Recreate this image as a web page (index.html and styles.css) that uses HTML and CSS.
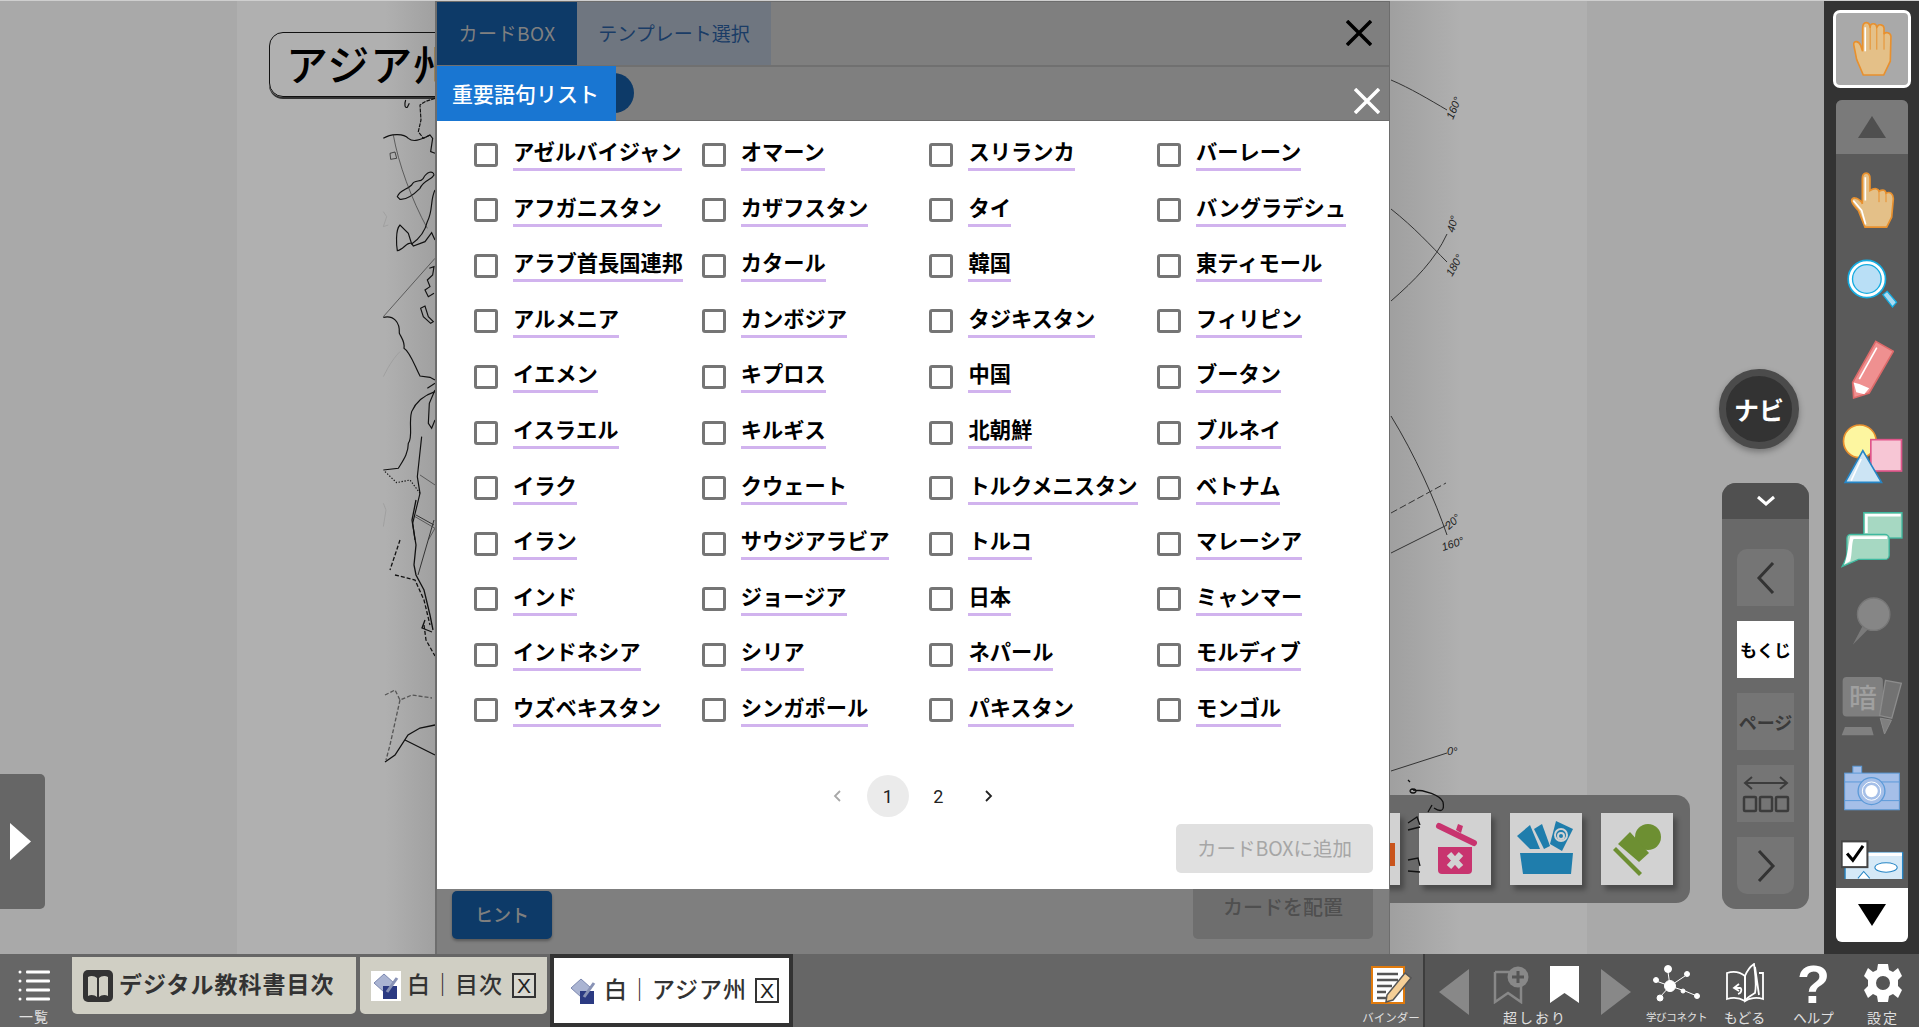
FILE: index.html
```html
<!DOCTYPE html>
<html lang="ja">
<head>
<meta charset="utf-8">
<title>カードBOX</title>
<link rel="stylesheet" href="styles.css">
</head>
<body>
<div class="app">
  <main class="workspace">
    <section class="stage">
      <div class="page-title">アジア州</div>

      <div class="stamp-tray">
        <div class="stamp"><svg width="72" height="72" viewBox="0 0 72 72"><rect x="62" y="30" width="5" height="23" fill="#c9541c"/></svg></div>
        <div class="stamp"><svg width="72" height="72" viewBox="0 0 72 72"><path d="M20 13L55 30" stroke="#c8346f" stroke-width="6" stroke-linecap="round"/><path d="M37 17l2-6 5 2-2 7Z" fill="#c8346f"/><path d="M19 34H53V57a4 4 0 0 1-4 4H23a4 4 0 0 1-4-4Z" fill="#c8346f"/><path d="M30 41L42 54M42 41L30 54" stroke="#d2d2d2" stroke-width="6"/></svg></div>
        <div class="stamp"><svg width="72" height="72" viewBox="0 0 72 72"><path d="M10 40H63L61 61H13Z" fill="#1f7dac"/><path d="M7 23L20 12L30 36H20Z" fill="#1f7dac"/><path d="M24 16L32 11L40 33L34 36Z" fill="#1f7dac"/><path d="M46 8L63 16L52 38L40 31Z" fill="#1f7dac"/><circle cx="51" cy="22" r="6" fill="none" stroke="#d2d2d2" stroke-width="2"/><circle cx="51" cy="23" r="3" fill="none" stroke="#d2d2d2" stroke-width="2"/></svg></div>
        <div class="stamp"><svg width="72" height="72" viewBox="0 0 72 72"><circle cx="47" cy="24" r="13" fill="#6d8f32"/><path d="M17 31L29 19L48 40L38 49Z" fill="#6d8f32"/><path d="M12 37L38 63L41 60L15 34Z" fill="#6d8f32"/></svg></div>
      </div>

      <svg class="map" width="1824" height="954" viewBox="0 0 1824 954">
        <g transform="translate(340 90) scale(.3333)" fill="none" stroke="#111" stroke-width="3.500">
          <path d="M197 30C192 45 195 55 202 52L208 40"/>
          <path d="M285 25L255 35L240 45L243 90L235 125L250 145L270 135" stroke-dasharray="12 3"/>
          <path d="M130 145C150 132 190 128 205 145C220 158 240 150 270 135L278 145L272 185L285 190"/>
          <path d="M150 190L165 186L170 205L152 208Z" stroke-width="2"/>
          <path d="M172 320C180 300 200 300 215 285C225 265 240 280 250 265C260 245 280 240 282 255C275 270 250 270 240 295C225 310 200 330 180 328Z"/>
          <path d="M285 300C270 330 280 360 262 395C255 425 240 445 215 462L205 430L180 405C165 420 170 470 172 482C190 480 200 455 215 460L220 468L255 455L275 428L285 450"/>
          <path d="M268 535L282 530L278 555L262 570L270 590L255 600L265 620L282 610"/>
          <path d="M242 655L255 648L265 680L280 695L272 700L250 680Z"/>
          <path d="M130 682C160 675 180 695 178 730C185 745 195 755 192 775C210 785 225 830 240 858L270 862L285 870"/>
          <path d="M285 905C255 915 230 930 215 965C205 1000 220 1040 205 1060C205 1090 190 1110 175 1135L130 1140"/>
          <path d="M285 900L268 940L265 1000L275 1015L285 990"/>
          <path d="M262 895L285 880"/>
          <path d="M245 1040L232 1160L240 1210L218 1300L225 1350"/>
          <path d="M135 1145L170 1178L210 1170L240 1210" stroke-dasharray="4 5"/>
          <path class="map-thin" d="M160 135C175 220 215 330 262 415M130 680L285 505M240 1155L285 1185M225 1280L285 1315L265 1350"/>
          <path class="map-faded" d="M180 785C165 800 150 820 130 860M130 365L140 380L130 410L145 405M130 1240L138 1260L130 1310"/>
        </g>
        <g fill="none" stroke="#111" stroke-width="1.300">
          <path d="M416 500L412 520L416 545L414 565L416 575L424 590L430 615L433 630M425 620L422 628L432 632"/>
          <path d="M424 625L426 640L435 656M395 575L415 580L424 600L430 625M400 540L390 570" stroke-dasharray="4 2"/>
          <path d="M385 695L395 690L400 700L412 695L432 698M400 700L390 745L386 760" stroke-dasharray="4 2" stroke="#555"/>
          <path d="M385 762L395 755L408 735L420 728L435 725M405 740L435 755"/>
          <path class="map-line" d="M416 515L434 525M434 520L418 575"/>
          <path class="map-line" d="M1391 80C1410 88 1430 100 1447 110M1391 209C1415 228 1430 245 1447 262M1391 301C1415 280 1435 260 1447 234M1391 416C1415 455 1435 500 1447 535M1391 553L1447 525M1391 771L1447 753"/>
          <path class="map-line" d="M1391 513L1446 483" stroke-dasharray="7 3"/>
          <path d="M1413 790C1425 790 1440 795 1443 802C1445 812 1440 812 1434 808M1432 805L1428 812M1413 789a3 2 0 1 0 .1 0M1408 780l2 2"/>
          <path d="M1408 823L1417 817L1420 825M1408 830L1420 827M1408 860L1418 858L1420 866M1408 871L1420 872"/>
        </g>
        <g class="map-text">
          <text transform="translate(1453 120) rotate(-68)">160°</text>
          <text transform="translate(1452 277) rotate(-60)">180°</text>
          <text transform="translate(1454 233) rotate(-75)">40°</text>
          <text transform="translate(1443 551) rotate(-18)">160°</text>
          <text transform="translate(1449 530) rotate(-42)">20°</text>
          <text x="1447" y="755">0°</text>
        </g>
      </svg>

      <aside class="drawer-toggle"><svg width="21" height="37" viewBox="0 0 21 37"><path d="M0 0L21 18.500L0 37Z" fill="#fff"/></svg></aside>

      <button class="navi">ナビ</button>

      <nav class="page-nav">
        <div class="page-nav-head"><svg width="20" height="12" viewBox="0 0 20 12"><path d="M2 2L10 9L18 2" fill="none" stroke="#fff" stroke-width="3"/></svg></div>
        <div class="page-nav-list">
          <div class="nav-btn nav-btn-top"><svg width="20" height="32" viewBox="0 0 20 32"><path d="M17 1L3 16L17 31" fill="none" stroke="#333" stroke-width="3"/></svg></div>
          <div class="nav-btn nav-btn-active">もくじ</div>
          <div class="nav-btn">ページ</div>
          <div class="nav-btn"><svg width="48" height="38" viewBox="0 0 48 38"><path d="M4 8H44M10 2L3 8L10 14M38 2L45 8L38 14" fill="none" stroke="#3c3c3c" stroke-width="2"/><g fill="none" stroke="#3c3c3c" stroke-width="2.500"><rect x="2" y="22" width="12" height="14" rx="1"/><rect x="18" y="22" width="12" height="14" rx="1"/><rect x="34" y="22" width="12" height="14" rx="1"/></g></svg></div>
          <div class="nav-btn nav-btn-bottom"><svg width="20" height="32" viewBox="0 0 20 32"><path d="M3 1L17 16L3 31" fill="none" stroke="#333" stroke-width="3"/></svg></div>
        </div>
      </nav>

      <div class="modal">
        <header class="modal-tabs">
          <div class="modal-tab modal-tab-active">カードBOX</div>
          <div class="modal-tab modal-tab-idle">テンプレート選択</div>
          <button class="icon-btn modal-close"><svg width="26" height="26" viewBox="0 0 26 26"><path d="M1 1L25 25M25 1L1 25" stroke="#000" stroke-width="3.500"/></svg></button>
        </header>
        <div class="modal-sub">
          <span class="sub-pill"></span>
          <div class="sub-title">重要語句リスト</div>
          <button class="icon-btn sub-close"><svg width="26" height="26" viewBox="0 0 26 26"><path d="M1 1L25 25M25 1L1 25" stroke="#fff" stroke-width="3.500"/></svg></button>
        </div>
        <div class="modal-body">
          <div class="terms">
            <label class="term"><input type="checkbox"><span>アゼルバイジャン</span></label>
            <label class="term"><input type="checkbox"><span>アフガニスタン</span></label>
            <label class="term"><input type="checkbox"><span>アラブ首長国連邦</span></label>
            <label class="term"><input type="checkbox"><span>アルメニア</span></label>
            <label class="term"><input type="checkbox"><span>イエメン</span></label>
            <label class="term"><input type="checkbox"><span>イスラエル</span></label>
            <label class="term"><input type="checkbox"><span>イラク</span></label>
            <label class="term"><input type="checkbox"><span>イラン</span></label>
            <label class="term"><input type="checkbox"><span>インド</span></label>
            <label class="term"><input type="checkbox"><span>インドネシア</span></label>
            <label class="term"><input type="checkbox"><span>ウズベキスタン</span></label>
            <label class="term"><input type="checkbox"><span>オマーン</span></label>
            <label class="term"><input type="checkbox"><span>カザフスタン</span></label>
            <label class="term"><input type="checkbox"><span>カタール</span></label>
            <label class="term"><input type="checkbox"><span>カンボジア</span></label>
            <label class="term"><input type="checkbox"><span>キプロス</span></label>
            <label class="term"><input type="checkbox"><span>キルギス</span></label>
            <label class="term"><input type="checkbox"><span>クウェート</span></label>
            <label class="term"><input type="checkbox"><span>サウジアラビア</span></label>
            <label class="term"><input type="checkbox"><span>ジョージア</span></label>
            <label class="term"><input type="checkbox"><span>シリア</span></label>
            <label class="term"><input type="checkbox"><span>シンガポール</span></label>
            <label class="term"><input type="checkbox"><span>スリランカ</span></label>
            <label class="term"><input type="checkbox"><span>タイ</span></label>
            <label class="term"><input type="checkbox"><span>韓国</span></label>
            <label class="term"><input type="checkbox"><span>タジキスタン</span></label>
            <label class="term"><input type="checkbox"><span>中国</span></label>
            <label class="term"><input type="checkbox"><span>北朝鮮</span></label>
            <label class="term"><input type="checkbox"><span>トルクメニスタン</span></label>
            <label class="term"><input type="checkbox"><span>トルコ</span></label>
            <label class="term"><input type="checkbox"><span>日本</span></label>
            <label class="term"><input type="checkbox"><span>ネパール</span></label>
            <label class="term"><input type="checkbox"><span>パキスタン</span></label>
            <label class="term"><input type="checkbox"><span>バーレーン</span></label>
            <label class="term"><input type="checkbox"><span>バングラデシュ</span></label>
            <label class="term"><input type="checkbox"><span>東ティモール</span></label>
            <label class="term"><input type="checkbox"><span>フィリピン</span></label>
            <label class="term"><input type="checkbox"><span>ブータン</span></label>
            <label class="term"><input type="checkbox"><span>ブルネイ</span></label>
            <label class="term"><input type="checkbox"><span>ベトナム</span></label>
            <label class="term"><input type="checkbox"><span>マレーシア</span></label>
            <label class="term"><input type="checkbox"><span>ミャンマー</span></label>
            <label class="term"><input type="checkbox"><span>モルディブ</span></label>
            <label class="term"><input type="checkbox"><span>モンゴル</span></label>
          </div>
          <div class="pager">
            <span class="pager-item pager-off"><svg width="10" height="14" viewBox="0 0 10 14"><path d="M8 2L3 7L8 12" fill="none" stroke="#a8a8a8" stroke-width="1.800"/></svg></span>
            <span class="pager-item pager-current">1</span>
            <span class="pager-item">2</span>
            <span class="pager-item"><svg width="10" height="14" viewBox="0 0 10 14"><path d="M2 2L7 7L2 12" fill="none" stroke="#222" stroke-width="1.800"/></svg></span>
          </div>
          <div class="modal-actions"><button class="btn-add">カードBOXに追加</button></div>
        </div>
        <footer class="modal-foot">
          <button class="btn-hint">ヒント</button>
          <button class="btn-place">カードを配置</button>
        </footer>
      </div>
    </section>

    <aside class="rail">
      <div class="tool-current">
        <svg width="39" height="56" viewBox="459 63 118 170"><path d="M490 227L470 180L461 135C460 122 476 122 482 137L488 155L488 85C488 62 510 62 511 85L511 80C512 68 530 68 531 82L533 80C535 72 552 72 553 85L553 103C555 96 573 96 574 110L572 185L552 227Z" fill="#e4c088" stroke="#e8902e" stroke-width="5"/><path d="M531 82V150M553 100V150M511 85V150" fill="none" stroke="#e8902e" stroke-width="3"/><path d="M496 82V155" stroke="#fff" stroke-width="5"/></svg>
      </div>
      <div class="tools">
        <div class="tool-up"><svg width="28" height="22" viewBox="0 0 28 22"><path d="M14 0L28 22H0Z" fill="#4f4f4f"/></svg></div>
        <div class="tool-list">
          <div class="tool"><svg width="45" height="57" viewBox="445 515 135 170"><path d="M490 680L470 630C460 618 450 610 450 600C450 590 465 588 480 605L482 610L482 535C482 512 505 512 505 535L505 570C520 560 530 565 532 572C545 565 552 570 553 578C565 572 575 580 575 595L570 650L555 680Z" fill="#e4c088" stroke="#e8902e" stroke-width="5"/><path d="M532 572V605M553 578V605" stroke="#e8902e" stroke-width="3"/><path d="M491 530V600M455 600L480 630L492 672" fill="none" stroke="#fff" stroke-width="5"/></svg></div>
          <div class="tool"><svg width="51" height="50" viewBox="438 778 152 150"><path d="M545 885L558 875L586 908L574 922Z" fill="#a9dbf3" stroke="#16ace0" stroke-width="4"/><circle cx="497" cy="838" r="56" fill="#fff" stroke="#16ace0" stroke-width="5"/><circle cx="497" cy="838" r="43" fill="#b9dff6" stroke="#16ace0" stroke-width="4"/></svg></div>
          <div class="tool tool-nudge-s"><svg width="43" height="59" viewBox="450 1022 130 178"><path d="M525 1026L578 1056L505 1182L458 1197L455 1150Z" fill="#ef9090" stroke="#dd6a6a" stroke-width="5"/><path d="M528 1045L475 1140" stroke="#fff" stroke-width="5"/><path d="M458 1150L475 1155L505 1168L490 1186L466 1180Z" fill="#fff"/></svg></div>
          <div class="tool tool-nudge-m"><svg width="61" height="60" viewBox="423 1270 182 180"><circle cx="476" cy="1322" r="49" fill="#fdf6a0" stroke="#e8902e" stroke-width="5"/><rect x="509" y="1317" width="92" height="94" fill="#f7c6d5" stroke="#e0558a" stroke-width="5"/><path d="M485 1350L432 1445H541Z" fill="#cce4f4" stroke="#2585c5" stroke-width="5"/><path d="M480 1375L450 1440" stroke="#fff" stroke-width="5"/></svg></div>
          <div class="tool tool-nudge-l"><svg width="62" height="58" viewBox="32 35 188 172"><rect x="101" y="38" width="116" height="77" fill="#a6d8c2" stroke="#3fb9a0" stroke-width="4"/><path d="M105 42H213V50H113V100H105Z" fill="#fff"/><path d="M62 104H165a13 13 0 0 1 13 13V167a13 13 0 0 1-13 13H85L35 202C45 185 50 170 50 160V116a12 12 0 0 1 12-12Z" fill="#a6d8c2" stroke="#3fb9a0" stroke-width="4"/><path d="M60 110H172V118H70C64 130 66 165 60 185L42 195C52 170 55 130 60 110Z" fill="#fff"/></svg></div>
          <div class="tool tool-nudge-s"><svg width="40" height="48" viewBox="458 353 116 145"><path d="M488 440L458 497L505 450Z" fill="#7a7a7a"/><circle cx="521" cy="405" r="49" fill="#868686" stroke="#777" stroke-width="4"/></svg></div>
          <div class="tool tool-nudge-m"><svg width="62" height="60" viewBox="424 590 186 182"><rect x="428" y="593" width="122" height="120" rx="12" fill="#7f7f7f"/><text class="tool-kanji" x="489" y="688" text-anchor="middle">暗</text><path d="M558 603L606 612L577 718L540 710Z" fill="#727272" stroke="#8c8c8c" stroke-width="4"/><path d="M542 718L576 724L555 766Z" fill="#7f7f7f" stroke="#8c8c8c" stroke-width="3"/><path d="M435 745H515L522 770H425Z" fill="#808080"/></svg></div>
          <div class="tool"><svg width="56" height="46" viewBox="431 855 171 137"><rect x="458" y="857" width="27" height="24" fill="#a5bfe8" stroke="#5c9ad8" stroke-width="3"/><rect x="433" y="878" width="167" height="112" fill="#a5bfe8" stroke="#5c9ad8" stroke-width="3"/><path d="M433 905H600M433 962H600" stroke="#5c9ad8" stroke-width="3"/><circle cx="515" cy="933" r="41" fill="#a5bfe8" stroke="#5c9ad8" stroke-width="4"/><circle cx="515" cy="933" r="28" fill="#a5bfe8" stroke="#fff" stroke-width="3"/><circle cx="515" cy="933" r="19" fill="#fff"/></svg></div>
          <div class="tool tool-last"><svg width="63" height="39" viewBox="420 1087 186 111"><rect x="432" y="1122" width="170" height="90" fill="#d5e9f7" stroke="#2585c5" stroke-width="4"/><path d="M500 1132H600V1122H500Z" fill="#fff"/><ellipse cx="553" cy="1166" rx="33" ry="14" fill="#fff" stroke="#2585c5" stroke-width="3"/><path d="M470 1198L487 1178L505 1198" fill="#fff" stroke="#2585c5" stroke-width="3"/><rect x="422" y="1089" width="76" height="76" fill="#fff" stroke="#444" stroke-width="6"/><path d="M438 1125L455 1145L485 1102" fill="none" stroke="#000" stroke-width="9"/></svg></div>
        </div>
        <div class="tool-down"><svg width="28" height="22" viewBox="0 0 28 22"><path d="M0 0H28L14 22Z" fill="#000"/></svg></div>
      </div>
    </aside>
  </main>

  <footer class="taskbar">
    <div class="task-left">
      <div class="task-list">
        <svg width="32" height="32" viewBox="0 0 32 32"><g fill="#fff"><circle cx="2" cy="3" r="1.500"/><circle cx="2" cy="12" r="1.500"/><circle cx="2" cy="21" r="1.500"/><circle cx="2" cy="30" r="1.500"/><rect x="8" y="1.500" width="24" height="3" rx="1"/><rect x="8" y="10.500" width="24" height="3" rx="1"/><rect x="8" y="19.500" width="24" height="3" rx="1"/><rect x="8" y="28.500" width="24" height="3" rx="1"/></g></svg>
        <span class="task-label">一覧</span>
      </div>
      <div class="doc-tab doc-tab-home">
        <svg width="30" height="32" viewBox="0 0 30 32"><rect width="30" height="32" rx="5" fill="#333"/><path d="M5 7C8 5 12 6 14 8V27C12 25 8 24 5 26ZM25 7C22 5 18 6 16 8V27C18 25 22 24 25 26Z" fill="#d0cfc4"/></svg>
        <span class="doc-label">デジタル教科書目次</span>
      </div>
      <div class="doc-tab doc-tab-book">
        <svg class="doc-icon" width="30" height="30" viewBox="0 0 30 30"><rect width="30" height="30" fill="#fff"/><path d="M3 12L13 3L23 12L13 21Z" fill="#aab4d2" stroke="#7c88b0"/><rect x="12" y="15" width="14" height="13" fill="#2b3a82"/><path d="M16 21L26 7" stroke="#8892b5" stroke-width="3"/></svg>
        <span class="doc-label">白｜目次</span>
        <span class="tab-x">X</span>
      </div>
      <div class="doc-tab doc-tab-current">
        <svg class="doc-icon" width="30" height="30" viewBox="0 0 30 30"><path d="M3 12L13 3L23 12L13 21Z" fill="#aab4d2" stroke="#7c88b0"/><rect x="12" y="15" width="14" height="13" fill="#2b3a82"/><path d="M16 21L26 7" stroke="#8892b5" stroke-width="3"/></svg>
        <span class="doc-label">白｜アジア州</span>
        <span class="tab-x">X</span>
      </div>
      <div class="task-item task-binder">
        <svg width="42" height="38" viewBox="0 0 42 38"><rect x="2" y="1" width="32" height="36" fill="#fff" stroke="#e07a0c" stroke-width="2"/><path d="M7 8H28M7 14H28M7 20H22M7 26H16M7 32H16" stroke="#555" stroke-width="2.500"/><path d="M35 7L41 12L23 34L16 36L17 29Z" fill="#f5cf97" stroke="#555" stroke-width="1.500"/></svg>
        <span class="task-label task-label-binder">バインダー</span>
      </div>
    </div>
    <div class="task-right">
      <div class="task-item task-prev"><svg width="30" height="46" viewBox="0 0 30 46"><path d="M30 0V46L0 23Z" fill="#888"/></svg></div>
      <div class="task-item task-marks">
        <div class="mark-icons">
          <svg width="37" height="38" viewBox="0 0 37 38"><path d="M2 6H18M28 16V36L15 27L2 36V6" fill="none" stroke="#888" stroke-width="2.500"/><circle cx="25" cy="11" r="10.500" fill="#888"/><path d="M25 5V17M19 11H31" stroke="#555" stroke-width="3"/></svg>
          <svg width="29" height="37" viewBox="0 0 29 37"><path d="M0 0H29V37L14.500 27L0 37Z" fill="#fff"/></svg>
        </div>
        <span class="task-label task-label-wide">超しおり</span>
      </div>
      <div class="task-item task-next"><svg width="30" height="46" viewBox="0 0 30 46"><path d="M0 0V46L30 23Z" fill="#888"/></svg></div>
      <div class="task-item task-net">
        <svg width="48" height="38" viewBox="0 0 48 38" fill="#fff" stroke="#fff"><path d="M17 22L15 8M17 22L3 17M17 22L7 33M17 22L32 12M17 22L32 27M32 27L44 32" fill="none"/><circle cx="15" cy="5" r="3.500"/><circle cx="3" cy="16" r="2.500"/><circle cx="7" cy="34" r="3"/><circle cx="34" cy="10" r="2.500"/><circle cx="17" cy="22" r="5.500"/><circle cx="30" cy="27" r="2"/><circle cx="44" cy="32" r="2.500"/></svg>
        <span class="task-label task-label-tight">学びコネクト</span>
      </div>
      <div class="task-item task-back">
        <svg width="40" height="41" viewBox="0 0 40 41" fill="none" stroke="#fff" stroke-width="1.800"><path d="M20 38C15 35 8 34 2 36V10C8 8 15 9 20 13V38C24 35 32 34 38 36V10H34"/><path d="M20 38V13C22 8 26 3 29 1C30 10 32 20 30 30C27 32 22 34 20 38ZM30 4L34 32"/><path d="M14 21L9 25L14 28M10 25H15C17 25 17 30 13 31"/></svg>
        <span class="task-label task-label-back">もどる</span>
      </div>
      <div class="task-item task-help">
        <span class="help-mark">?</span>
        <span class="task-label">ヘルプ</span>
      </div>
      <div class="task-item">
        <svg width="38" height="40" viewBox="-19 -20 38 40"><path fill="#fff" fill-rule="evenodd" d="M-5-19H5L6-13 10-11 15-15 19-7 15-3V3L19 7 15 15 10 11 6 13 5 19H-5L-6 13-10 11-15 15-19 7-15 3V-3L-19-7-15-15-10-11-6-13ZM0-7A7 7 0 1 0 0 7 7 7 0 1 0 0-7Z"/></svg>
        <span class="task-label task-label-wide">設定</span>
      </div>
    </div>
  </footer>
</div>
</body>
</html>
```

FILE: styles.css
```css
* { box-sizing: border-box; }
html, body { margin: 0; padding: 0; overflow: hidden; }
body { font-family: "Noto Sans CJK JP", "Noto Sans", sans-serif; background: #a9a9a9; }
button { font-family: inherit; border: 0; padding: 0; }

.app { width: 1919px; height: 1027px; display: flex; flex-direction: column; }
.workspace { height: 954px; display: flex; }

/* stage */
.stage {
  position: relative;
  width: 1824px;
  height: 954px;
  overflow: hidden;
  border-top: 1px solid #cfcfcf;
  background: linear-gradient(90deg, #a9a9a9 0, #a9a9a9 237px, #b0b0b0 237px, #b0b0b0 385px, #a0a0a0 436px, #a0a0a0 1392px, #b0b0b0 1460px, #b0b0b0 1587px, #a9a9a9 1587px);
}
.map { position: absolute; left: 0; top: -1px; }
.map-thin { stroke: #333; stroke-width: 2; }
.map-faded { stroke: #999; stroke-width: 2; }
.map-line { stroke: #333; stroke-width: 1; }
.map-text { font: italic 11px "Liberation Sans", sans-serif; fill: #222; }

.page-title {
  position: absolute;
  left: 269px;
  top: 31px;
  width: 280px;
  height: 65px;
  padding-left: 16px;
  border: 1px solid #111;
  border-radius: 14px;
  box-shadow: 0 2px 0 #333;
  font-size: 42px;
  line-height: 60px;
  font-weight: 500;
  letter-spacing: 1px;
  color: #000;
}

.drawer-toggle {
  position: absolute;
  left: 0;
  top: 773px;
  width: 45px;
  height: 135px;
  padding: 49px 0 0 10px;
  background: #666;
  border-radius: 0 5px 5px 0;
}

.stamp-tray {
  position: absolute;
  left: 1290px;
  top: 794px;
  width: 400px;
  height: 108px;
  padding: 18px 17px 0 0;
  display: flex;
  justify-content: flex-end;
  gap: 19px;
  background: #696969;
  border-radius: 0 14px 14px 0;
}
.stamp { width: 72px; height: 72px; background: #d2d2d2; box-shadow: 4px 5px 5px rgba(0,0,0,.3); }

.navi {
  position: absolute;
  left: 1719px;
  top: 368px;
  width: 80px;
  height: 80px;
  border-radius: 50%;
  background: #333;
  border: 7px solid #4b4b4b;
  box-shadow: 0 3px 6px rgba(0,0,0,.3);
  color: #fff;
  font-size: 25px;
  font-weight: 700;
  line-height: 1;
}

.page-nav {
  position: absolute;
  left: 1722px;
  top: 482px;
  width: 87px;
  height: 426px;
  background: #696969;
  border-radius: 14px;
  overflow: hidden;
}
.page-nav-head { height: 36px; background: #505050; display: flex; align-items: center; justify-content: center; }
.page-nav-list { padding: 30px 0 0 15px; display: flex; flex-direction: column; gap: 15px; }
.nav-btn {
  width: 57px;
  height: 57px;
  background: #757575;
  display: flex;
  align-items: center;
  justify-content: center;
  font-size: 18px;
  font-weight: 700;
  color: #3a3a3a;
  white-space: nowrap;
}
.nav-btn-active { background: #fff; color: #000; font-size: 17px; }
.nav-btn-top { border-radius: 10px 10px 0 0; }
.nav-btn-bottom { border-radius: 0 0 10px 10px; }

/* modal */
.modal {
  position: absolute;
  left: 435px;
  top: 0;
  width: 955px;
  height: 953px;
  background: #7f7f7f;
  border-left: 2px solid #6d6d6d;
  border-right: 1px solid #6d6d6d;
  border-top: 1px solid #6d6d6d;
  display: flex;
  flex-direction: column;
}
.modal-tabs { position: relative; height: 65px; flex: none; display: flex; border-bottom: 2px solid #707070; }
.modal-tab { height: 63px; padding-bottom: 3px; display: flex; align-items: center; justify-content: center; font-size: 19px; }
.modal-tab-active { width: 140px; background: #0d3a68; color: #808080; letter-spacing: .5px; }
.modal-tab-idle { width: 194px; background: #6f7680; color: #1a3c66; }
.icon-btn { position: absolute; background: none; line-height: 0; }
.modal-close { right: 17px; top: 18px; }
.modal-sub { position: relative; height: 54px; flex: none; border-bottom: 1px solid #6d6d6d; }
.sub-pill { position: absolute; left: 150px; top: 6px; width: 47px; height: 40px; border-radius: 20px; background: #0d3a68; }
.sub-title {
  position: absolute;
  left: 0;
  top: -1px;
  width: 179px;
  height: 55px;
  padding-left: 15px;
  background: #1976d2;
  color: #fff;
  font-size: 21px;
  font-weight: 500;
  line-height: 55px;
}
.sub-close { right: 9px; top: 21px; }

.modal-body { flex: none; height: 768px; background: #fff; display: flex; flex-direction: column; }
.terms {
  padding: 6px 0 0 37px;
  display: grid;
  grid-auto-flow: column;
  grid-template-rows: repeat(11, 55.560px);
  grid-template-columns: repeat(4, 227.700px);
}
.term { display: flex; align-items: center; gap: 15px; }
.term input {
  appearance: none;
  flex: none;
  width: 24px;
  height: 24px;
  margin: 0;
  border: 3px solid #757575;
  border-radius: 3px;
  background: #fff;
}
.term span {
  display: inline-block;
  font-size: 21.250px;
  font-weight: 700;
  line-height: 26px;
  padding-bottom: 4px;
  border-bottom: 3px solid #d1b3ee;
  color: #000;
  white-space: nowrap;
}

.pager { margin-top: 37px; display: flex; justify-content: center; gap: 8.500px; }
.pager-item {
  width: 42px;
  height: 42px;
  border-radius: 50%;
  display: flex;
  align-items: center;
  justify-content: center;
  font: 18px Roboto, sans-serif;
  color: #222;
}
.pager-current { background: #ebebeb; }
.modal-actions { margin-top: 7px; padding-right: 16px; display: flex; justify-content: flex-end; }
.btn-add {
  width: 197px;
  height: 49px;
  padding-bottom: 2px;
  background: #e0e0e0;
  color: #a6a6a6;
  border-radius: 5px;
  font-size: 19.500px;
}

.modal-foot { flex: 1; padding: 0 16px 0 15px; display: flex; justify-content: space-between; align-items: flex-start; }
.btn-hint {
  width: 100px;
  height: 48px;
  margin-top: 2px;
  padding-bottom: 3px;
  background: #0d3a68;
  color: #7f7f7f;
  border-radius: 5px;
  font-size: 18px;
  font-weight: 500;
  box-shadow: 0 2px 3px rgba(0,0,0,.3);
}
.btn-place {
  width: 180px;
  height: 50px;
  padding-bottom: 16px;
  background: #6e6e6e;
  color: #4f4f4f;
  border-radius: 0 0 5px 5px;
  font-size: 20px;
  font-weight: 500;
}

/* right rail */
.rail { width: 95px; height: 954px; background: #333; border-top: 1px solid #cfcfcf; padding: 9px 0 0 9px; }
.tool-current {
  width: 78px;
  height: 78px;
  border: 3px solid #fff;
  border-radius: 7px;
  background: #a9a9a9;
  display: flex;
  align-items: center;
  justify-content: center;
}
.tools { width: 72px; height: 842px; margin: 12px 0 0 3px; background: #5a5a5a; border-radius: 6px; overflow: hidden; display: flex; flex-direction: column; }
.tool-up { height: 54px; flex: none; background: #7a7a7a; display: flex; align-items: center; justify-content: center; }
.tool-list { height: 734px; flex: none; padding-top: 4px; overflow: hidden; }
.tool { width: 72px; height: 84px; display: flex; align-items: center; justify-content: center; }
.tool-nudge-s { padding-top: 2px; }
.tool-nudge-m { padding-top: 4px; }
.tool-nudge-l { padding-top: 7px; }
.tool-last { align-items: flex-start; padding-top: 10px; }
.tool-kanji { font-size: 84px; fill: #a0a0a0; font-weight: 500; }
.tool-down { height: 54px; flex: none; background: #fff; display: flex; align-items: center; justify-content: center; }

/* taskbar */
.taskbar { height: 73px; display: flex; background: #555; }
.task-left { width: 1423px; height: 73px; flex: none; background: #666; display: flex; align-items: flex-start; }
.task-right { width: 496px; height: 73px; flex: none; background: #555; border-left: 2px solid #3d3d3d; display: flex; }
.task-list { width: 72px; height: 73px; flex: none; padding: 15px 4px 0 0; display: flex; flex-direction: column; align-items: center; }
.task-label { color: #e0e0e0; font-size: 13.500px; line-height: 16px; white-space: nowrap; }
.task-list .task-label { margin-top: 7px; font-size: 14px; letter-spacing: 1px; }
.doc-tab {
  height: 57px;
  margin-top: 3px;
  flex: none;
  display: flex;
  align-items: center;
  background: #d0cfc4;
  border-radius: 0 0 5px 5px;
  color: #333;
  font-size: 23px;
  font-weight: 500;
  letter-spacing: 1px;
  white-space: nowrap;
}
.doc-label { margin-bottom: 5px; }
.doc-tab-home { width: 284px; padding: 0 0 0 11px; gap: 6px; margin-right: 4px; font-weight: 700; }
.doc-tab-book { width: 187px; padding-left: 11px; margin-right: 3px; }
.doc-tab-book .doc-icon { margin-right: 6px; }
.doc-tab-current { width: 243px; height: 73px; margin-top: 0; padding: 0 0 0 14px; background: #fff; border: 4px solid #333; border-radius: 0; }
.doc-tab-current .doc-icon { margin-right: 6px; }
.tab-x {
  width: 24px;
  height: 25px;
  margin-left: 9px;
  border: 2px solid #333;
  font: 21px/21px "Liberation Sans", sans-serif;
  letter-spacing: 0;
  text-align: center;
  color: #222;
  background: #d8d8d0;
}
.doc-tab-current .tab-x { margin-left: 8px; background: #fff; }

.task-item { width: 72px; height: 73px; flex: none; padding-top: 9px; display: flex; flex-direction: column; align-items: center; justify-content: space-between; padding-bottom: 2px; }
.task-binder { width: 60px; margin-left: auto; margin-right: 2px; padding-top: 12px; }
.task-prev, .task-next { width: 58px; padding-top: 15px; justify-content: flex-start; }
.task-marks { width: 104px; }
.mark-icons { display: flex; align-items: flex-start; gap: 20px; padding: 3px 0 0 2px; }
.task-net { width: 63px; padding-top: 10px; }
.task-help { width: 67px; padding-top: 7px; }
.task-back { padding-left: 1px; }
.task-label-wide { font-size: 14px; letter-spacing: 2px; }
.task-label-tight { font-size: 10.500px; letter-spacing: -.3px; }
.task-label-binder { font-size: 11.500px; }
.task-label-back { font-size: 14px; }
.help-mark { font: 700 54px/46px "Liberation Sans", sans-serif; color: #fff; }
```
